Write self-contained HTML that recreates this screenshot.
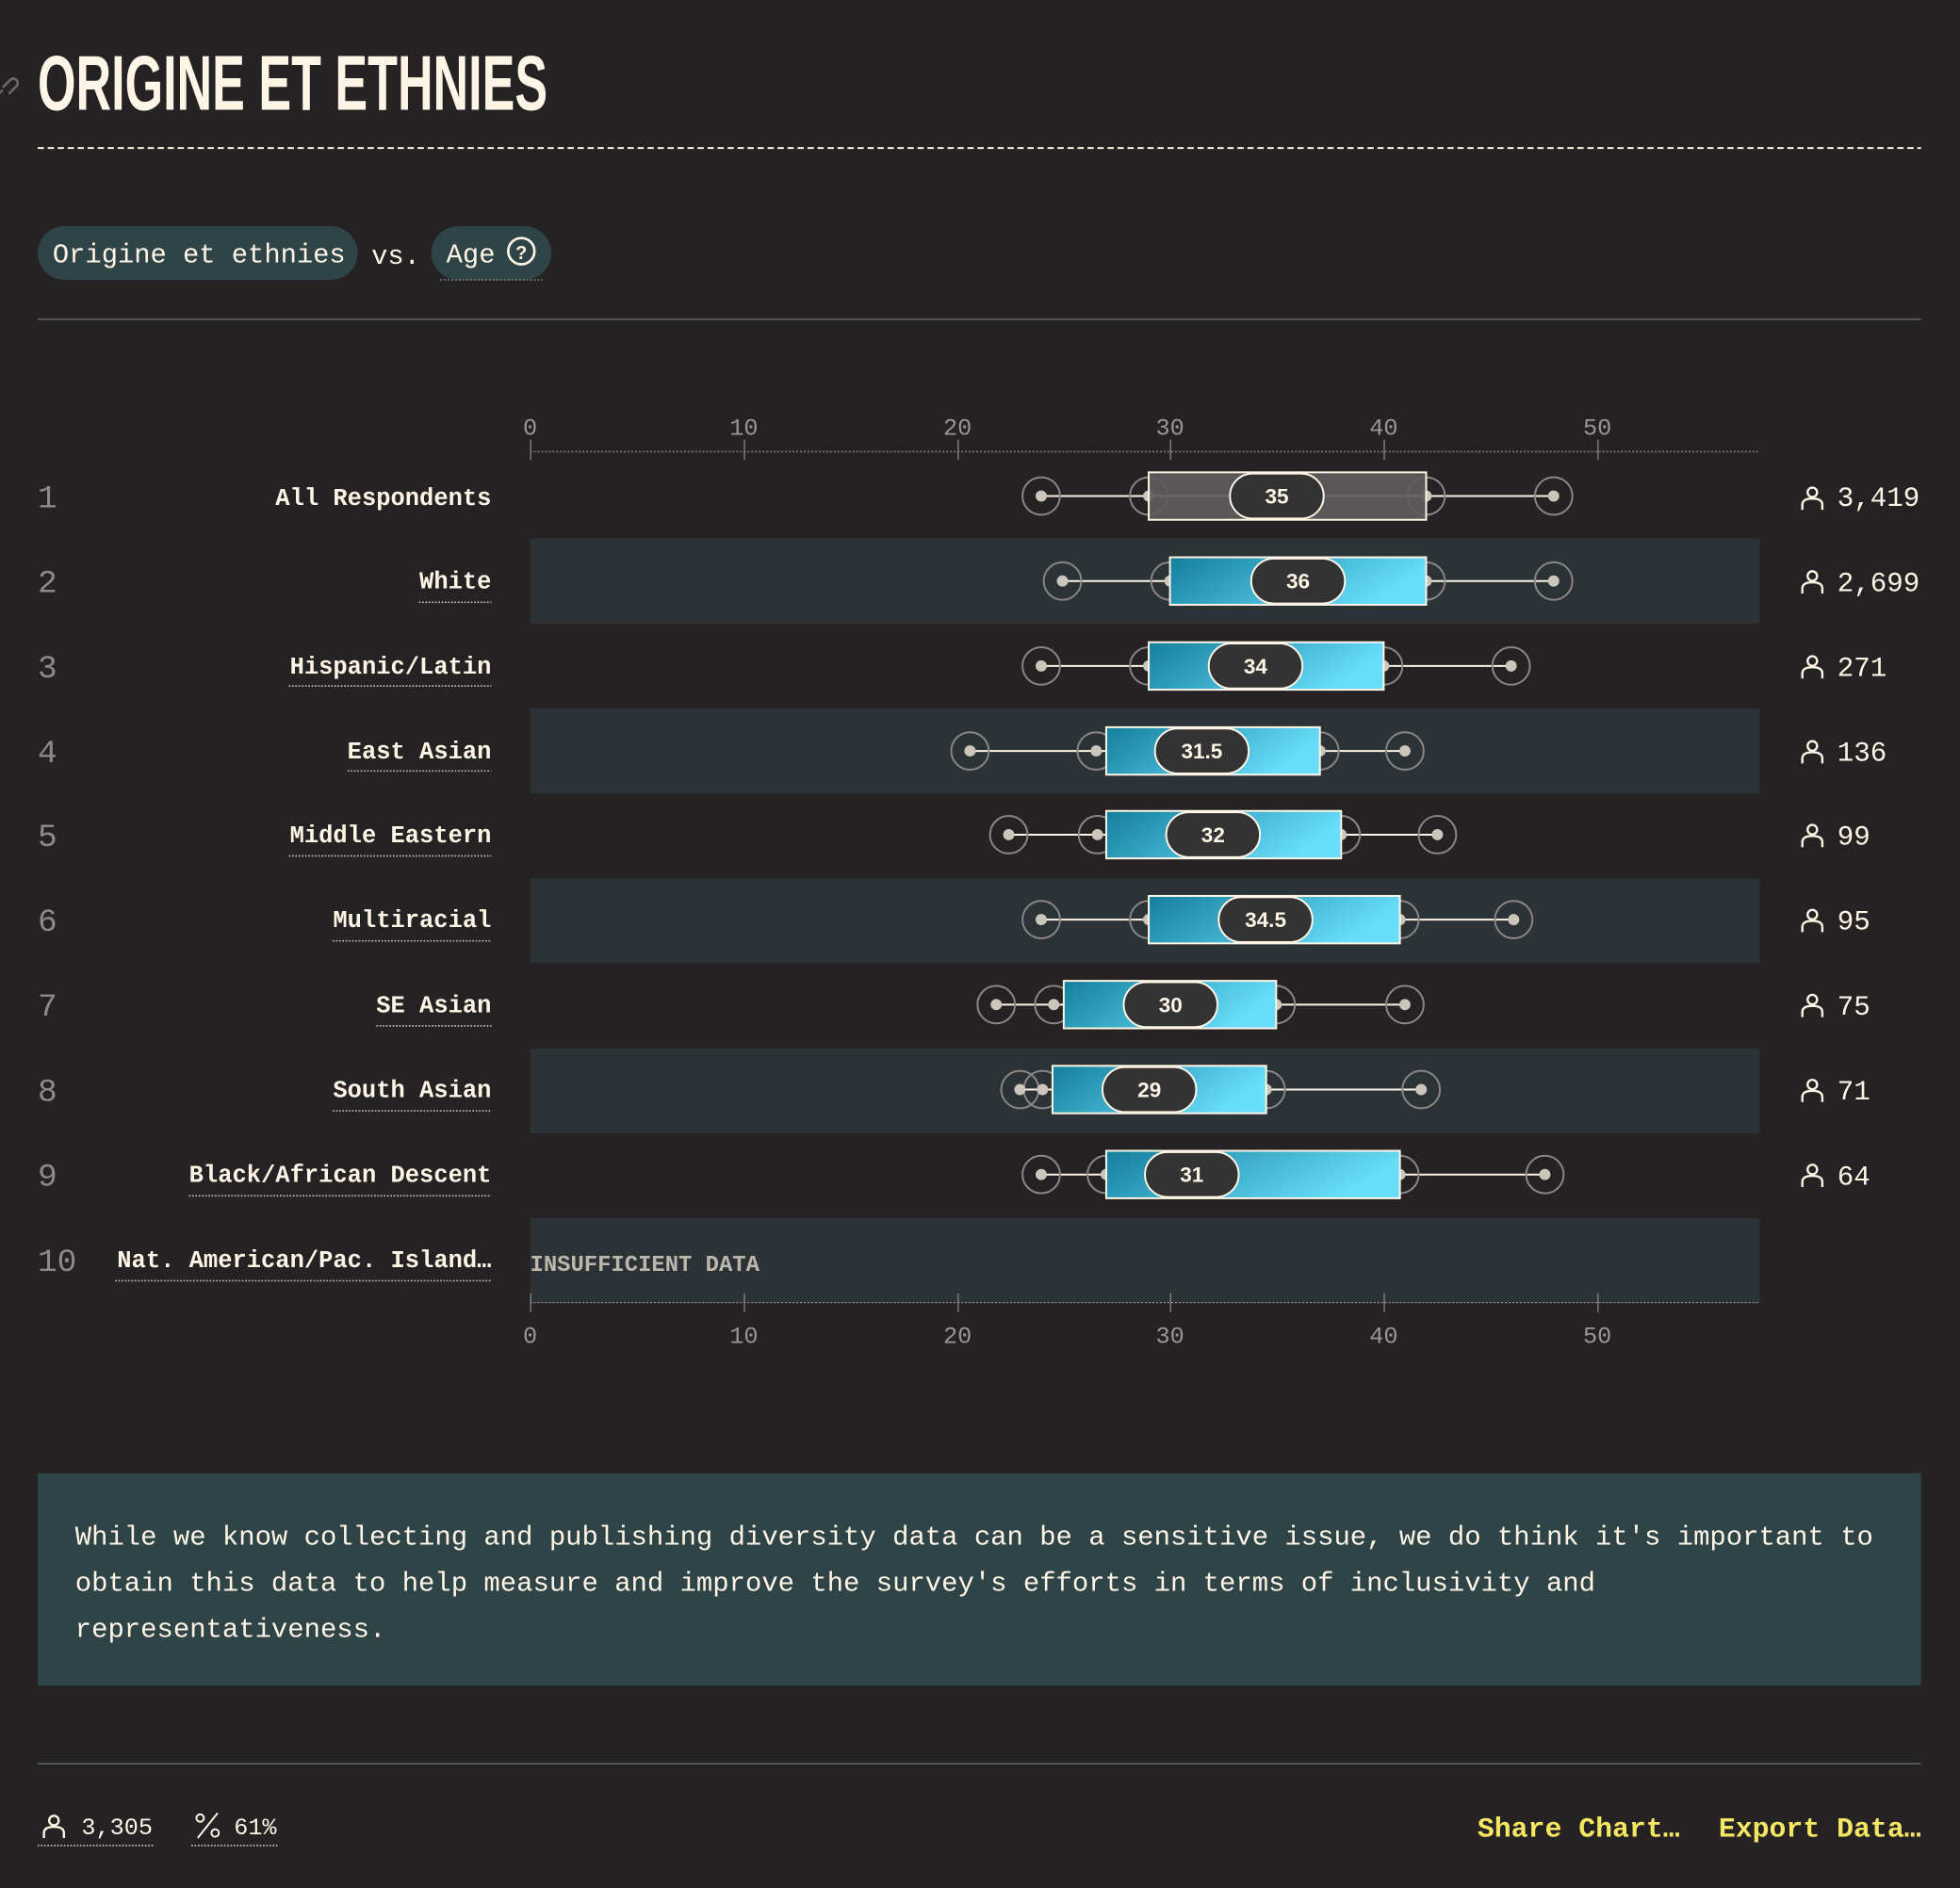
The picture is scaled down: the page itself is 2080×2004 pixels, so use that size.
<!DOCTYPE html>
<html><head><meta charset="utf-8"><style>
html,body{margin:0;padding:0;background:#252223;width:2080px;height:2004px;overflow:hidden}
svg{display:block}
.m{font-family:"Liberation Mono",monospace}
.s{font-family:"Liberation Sans",sans-serif}
</style></head><body>
<svg width="2080" height="2004" viewBox="0 0 1568 1511" xmlns="http://www.w3.org/2000/svg">
<defs>
<linearGradient id="g" x1="0" y1="0" x2="1" y2="0.3"><stop offset="0" stop-color="#137f9c"/><stop offset="1" stop-color="#68defb"/></linearGradient>
<g id="p"><circle cx="0" cy="-5" r="3.8" fill="none" stroke="#fff5e6" stroke-width="1.8"/><path d="M-8 9 V5 Q-8 0 0 0 Q8 0 8 5 V9" fill="none" stroke="#fff5e6" stroke-width="1.8"/></g>
</defs>
<rect width="1568" height="1511" fill="#252223"/>
<g stroke="#6b6768" stroke-width="2" fill="none"><path d="M2 70 l6 -6 a3 3 0 0 1 5 5 l-6 6"/><path d="M-2 76 l4 -4"/></g>
<text x="30" y="88" class="s" font-weight="bold" font-size="62" fill="#fff5e6" textLength="408" lengthAdjust="spacingAndGlyphs">ORIGINE ET ETHNIES</text>
<line x1="30" y1="118.5" x2="1537" y2="118.5" stroke="#fff5e6" stroke-width="1.5" stroke-dasharray="5 3"/>
<rect x="30" y="181" width="256" height="43" rx="21.5" fill="#2f4447"/>
<text x="42" y="210" class="m" font-size="21.7" fill="#fff5e6">Origine et ethnies</text>
<text x="297" y="211" class="m" font-size="21.7" fill="#fff5e6">vs.</text>
<rect x="345" y="181" width="96" height="43" rx="21.5" fill="#2f4447"/>
<path d="M352 224 H434" stroke="#888" stroke-dasharray="1.5 1.5"/>
<text x="357" y="210" class="m" font-size="21.7" fill="#fff5e6">Age</text>
<circle cx="417" cy="201" r="10.5" fill="none" stroke="#fff5e6" stroke-width="2"/>
<text x="417" y="207.5" text-anchor="middle" class="s" font-weight="bold" font-size="15" fill="#fff5e6">?</text>
<line x1="30" y1="255.5" x2="1537" y2="255.5" stroke="#555" stroke-width="1.5"/>

<g fill="#2c3336">
<rect x="424" y="431" width="984" height="68"/><rect x="424" y="567" width="984" height="68"/><rect x="424" y="703" width="984" height="68"/><rect x="424" y="839" width="984" height="68"/><rect x="424" y="975" width="984" height="68"/>
</g>
<g class="m" font-size="19" fill="#9a9696" text-anchor="middle">
<text x="424" y="348">0</text><text x="595" y="348">10</text><text x="766" y="348">20</text><text x="936" y="348">30</text><text x="1107" y="348">40</text><text x="1278" y="348">50</text>
<text x="424" y="1075">0</text><text x="595" y="1075">10</text><text x="766" y="1075">20</text><text x="936" y="1075">30</text><text x="1107" y="1075">40</text><text x="1278" y="1075">50</text>
</g>
<g stroke="#8a8686" stroke-width="1">
<line x1="424" y1="361.5" x2="1408" y2="361.5" stroke-dasharray="1.5 1.5"/>
<line x1="424" y1="1042.5" x2="1408" y2="1042.5" stroke-dasharray="1.5 1.5"/>
<path d="M424.5 352v16M595.5 352v16M766.5 352v16M936.5 352v16M1107.5 352v16M1278.5 352v16"/>
<path d="M424.5 1035v15M595.5 1035v15M766.5 1035v15M936.5 1035v15M1107.5 1035v15M1278.5 1035v15"/>
</g>

<g class="m" font-size="26" fill="#8e8a8a">
<text x="30" y="406">1</text><text x="30" y="474">2</text><text x="30" y="542">3</text><text x="30" y="610">4</text><text x="30" y="677">5</text><text x="30" y="745">6</text><text x="30" y="813">7</text><text x="30" y="881">8</text><text x="30" y="949">9</text><text x="30" y="1017">10</text>
</g>
<g class="m" font-size="19.2" font-weight="bold" fill="#fff5e6" text-anchor="end">
<text x="393" y="404">All Respondents</text><text x="393" y="471">White</text><text x="393" y="539">Hispanic/Latin</text><text x="393" y="607">East Asian</text><text x="393" y="674">Middle Eastern</text><text x="393" y="742">Multiracial</text><text x="393" y="810">SE Asian</text><text x="393" y="878">South Asian</text><text x="393" y="946">Black/African Descent</text><text x="393" y="1014">Nat. American/Pac. Island…</text>
</g>
<g stroke="#bdb6ad" stroke-width="1.3" stroke-dasharray="1.3 1.3">
<path d="M335 482H393M231 549H393M278 617H393M231 685H393M266 753H393M301 821H393M266 889H393M151 957H393M92 1025H393"/>
</g>
<text x="424" y="1017" class="m" font-size="18" font-weight="bold" fill="#bdb6ad">INSUFFICIENT DATA</text>

<g class="m" font-size="22" fill="#fff5e6">
<use href="#p" x="1450" y="399"/><text x="1470" y="405">3,419</text>
<use href="#p" x="1450" y="466"/><text x="1470" y="473">2,699</text>
<use href="#p" x="1450" y="534"/><text x="1470" y="541">271</text>
<use href="#p" x="1450" y="602"/><text x="1470" y="609">136</text>
<use href="#p" x="1450" y="669"/><text x="1470" y="676">99</text>
<use href="#p" x="1450" y="737"/><text x="1470" y="744">95</text>
<use href="#p" x="1450" y="805"/><text x="1470" y="812">75</text>
<use href="#p" x="1450" y="873"/><text x="1470" y="880">71</text>
<use href="#p" x="1450" y="941"/><text x="1470" y="948">64</text>
</g>

<g stroke="#fff5e6" stroke-width="1.5">
<path d="M833 397H1243M850 465H1243M833 533H1209M776 601H1124M807 668H1150M833 736H1211M797 804H1124M816 872H1137M833 940H1236"/>
</g>
<g fill="none" stroke="#8a8686" stroke-width="1.5">
<circle cx="833" cy="397" r="15"/><circle cx="919" cy="397" r="15"/><circle cx="1141" cy="397" r="15"/><circle cx="1243" cy="397" r="15"/>
<circle cx="850" cy="465" r="15"/><circle cx="936" cy="465" r="15"/><circle cx="1141" cy="465" r="15"/><circle cx="1243" cy="465" r="15"/>
<circle cx="833" cy="533" r="15"/><circle cx="919" cy="533" r="15"/><circle cx="1107" cy="533" r="15"/><circle cx="1209" cy="533" r="15"/>
<circle cx="776" cy="601" r="15"/><circle cx="877" cy="601" r="15"/><circle cx="1056" cy="601" r="15"/><circle cx="1124" cy="601" r="15"/>
<circle cx="807" cy="668" r="15"/><circle cx="878" cy="668" r="15"/><circle cx="1073" cy="668" r="15"/><circle cx="1150" cy="668" r="15"/>
<circle cx="833" cy="736" r="15"/><circle cx="919" cy="736" r="15"/><circle cx="1120" cy="736" r="15"/><circle cx="1211" cy="736" r="15"/>
<circle cx="797" cy="804" r="15"/><circle cx="843" cy="804" r="15"/><circle cx="1021" cy="804" r="15"/><circle cx="1124" cy="804" r="15"/>
<circle cx="816" cy="872" r="15"/><circle cx="834" cy="872" r="15"/><circle cx="1013" cy="872" r="15"/><circle cx="1137" cy="872" r="15"/>
<circle cx="833" cy="940" r="15"/><circle cx="885" cy="940" r="15"/><circle cx="1120" cy="940" r="15"/><circle cx="1236" cy="940" r="15"/>
</g>
<g fill="#ccc5bb">
<circle cx="833" cy="397" r="4.5"/><circle cx="919" cy="397" r="4.5"/><circle cx="1141" cy="397" r="4.5"/><circle cx="1243" cy="397" r="4.5"/>
<circle cx="850" cy="465" r="4.5"/><circle cx="936" cy="465" r="4.5"/><circle cx="1141" cy="465" r="4.5"/><circle cx="1243" cy="465" r="4.5"/>
<circle cx="833" cy="533" r="4.5"/><circle cx="919" cy="533" r="4.5"/><circle cx="1107" cy="533" r="4.5"/><circle cx="1209" cy="533" r="4.5"/>
<circle cx="776" cy="601" r="4.5"/><circle cx="877" cy="601" r="4.5"/><circle cx="1056" cy="601" r="4.5"/><circle cx="1124" cy="601" r="4.5"/>
<circle cx="807" cy="668" r="4.5"/><circle cx="878" cy="668" r="4.5"/><circle cx="1073" cy="668" r="4.5"/><circle cx="1150" cy="668" r="4.5"/>
<circle cx="833" cy="736" r="4.5"/><circle cx="919" cy="736" r="4.5"/><circle cx="1120" cy="736" r="4.5"/><circle cx="1211" cy="736" r="4.5"/>
<circle cx="797" cy="804" r="4.5"/><circle cx="843" cy="804" r="4.5"/><circle cx="1021" cy="804" r="4.5"/><circle cx="1124" cy="804" r="4.5"/>
<circle cx="816" cy="872" r="4.5"/><circle cx="834" cy="872" r="4.5"/><circle cx="1013" cy="872" r="4.5"/><circle cx="1137" cy="872" r="4.5"/>
<circle cx="833" cy="940" r="4.5"/><circle cx="885" cy="940" r="4.5"/><circle cx="1120" cy="940" r="4.5"/><circle cx="1236" cy="940" r="4.5"/>
</g>
<g stroke="#fff5e6" stroke-width="1.5">
<rect x="919" y="378" width="222" height="38" fill="#5f5c5d" fill-opacity="0.92"/>
<rect x="936" y="446" width="205" height="38" fill="url(#g)"/>
<rect x="919" y="514" width="188" height="38" fill="url(#g)"/>
<rect x="885" y="582" width="171" height="38" fill="url(#g)"/>
<rect x="885" y="649" width="188" height="38" fill="url(#g)"/>
<rect x="919" y="717" width="201" height="38" fill="url(#g)"/>
<rect x="851" y="785" width="170" height="38" fill="url(#g)"/>
<rect x="842" y="853" width="171" height="38" fill="url(#g)"/>
<rect x="885" y="921" width="235" height="38" fill="url(#g)"/>
</g>
<g fill="#333" stroke="#fff5e6" stroke-width="1.5">
<rect x="984" y="379" width="75" height="36" rx="18"/>
<rect x="1001" y="447" width="75" height="36" rx="18"/>
<rect x="967" y="515" width="75" height="36" rx="18"/>
<rect x="924" y="583" width="75" height="36" rx="18"/>
<rect x="933" y="650" width="75" height="36" rx="18"/>
<rect x="975" y="718" width="75" height="36" rx="18"/>
<rect x="899" y="786" width="75" height="36" rx="18"/>
<rect x="882" y="854" width="75" height="36" rx="18"/>
<rect x="916" y="922" width="75" height="36" rx="18"/>
</g>
<g class="s" font-weight="bold" font-size="17" fill="#fff5e6" text-anchor="middle">
<text x="1021.5" y="403">35</text><text x="1038.5" y="471">36</text><text x="1004.5" y="539">34</text><text x="961.5" y="607">31.5</text><text x="970.5" y="674">32</text><text x="1012.5" y="742">34.5</text><text x="936.5" y="810">30</text><text x="919.5" y="878">29</text><text x="953.5" y="946">31</text>
</g>

<rect x="30" y="1179" width="1507" height="170" fill="#2f4447"/>
<g class="m" font-size="21.8" fill="#fff5e6">
<text x="60" y="1236">While we know collecting and publishing diversity data can be a sensitive issue, we do think it's important to</text>
<text x="60" y="1273">obtain this data to help measure and improve the survey's efforts in terms of inclusivity and</text>
<text x="60" y="1310">representativeness.</text>
</g>
<line x1="30" y1="1411.5" x2="1537" y2="1411.5" stroke="#555" stroke-width="1.5"/>
<use href="#p" x="43" y="1462"/>
<g class="m" font-size="19" fill="#fff5e6"><text x="65" y="1468">3,305</text><text x="187" y="1468">61%</text></g>
<g stroke="#fff5e6" stroke-width="1.5" fill="none"><circle cx="160" cy="1455" r="3"/><circle cx="172" cy="1467" r="3"/><path d="M174 1451 L158 1471"/></g>
<path d="M30 1477H123M153 1477H222" stroke="#bdb6ad" stroke-width="1.3" stroke-dasharray="1.3 1.3"/>
<g class="m" font-size="22.5" font-weight="bold" fill="#f5e663"><text x="1182" y="1470">Share Chart…</text><text x="1375" y="1470">Export Data…</text></g>
</svg>
</body></html>
